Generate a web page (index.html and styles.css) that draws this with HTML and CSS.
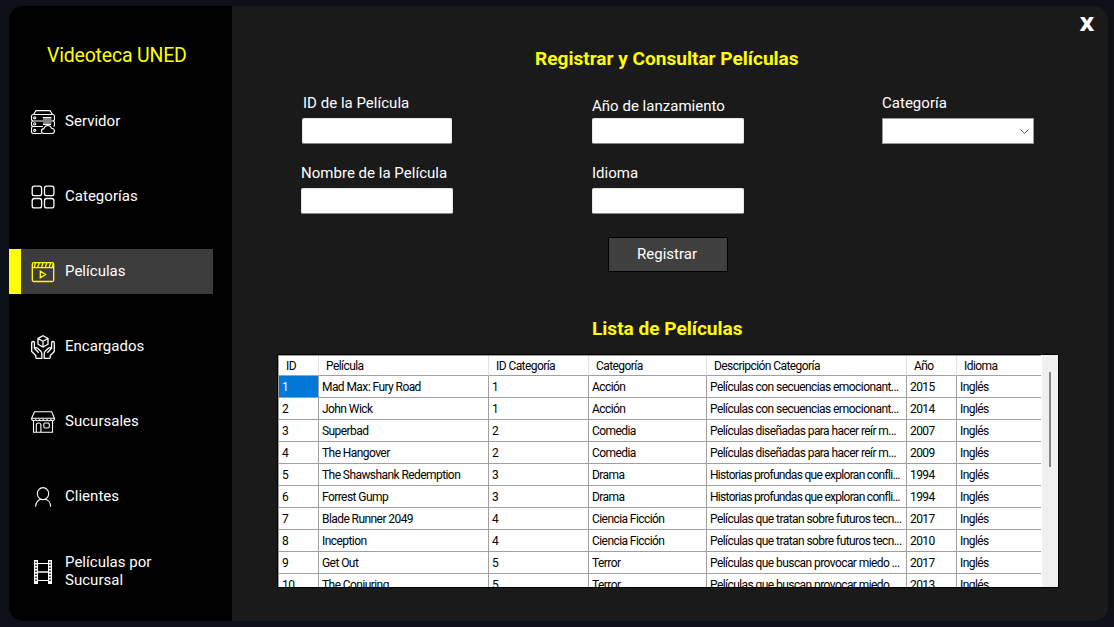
FILE: index.html
```html
<!DOCTYPE html>
<html lang="es">
<head>
<meta charset="utf-8">
<title>Videoteca UNED</title>
<link rel="stylesheet" href="styles.css">
</head>
<body>
<div class="window">
  <aside class="sidebar">
    <div class="brand">Videoteca UNED</div>
    <nav class="menu">
      <a class="item"><svg class="icon" viewBox="0 0 24 24"><path d="M2.500 4.500 5 .6h14l2.500 3.900M12 16.500H2.500q-2 0-2-2v-1.500q0-2 2-2h19q2 0 2 2v1.500q0 1.500-1 2M2.500 4.500h19q2 0 2 2v2.500q0 2-2 2h-19q-2 0-2-2V6.500q0-2 2-2zM2.500 16.500q-2 0-2 2v3q0 2 2 2h8M12 7.500h8.500M12 9h8.500M12 13h8.500M12 14.500h8"/><path class="cloud" d="M13 23.500q-2.600-.2-2.600-2.500 0-2 2.500-2.400.9-3.100 4-3.100 2.800 0 3.600 2.800 3 .3 3 2.700 0 2.500-2.500 2.500z"/><circle cx="3.700" cy="7.800" r="1.100"/><circle cx="3.700" cy="13.900" r="1.100"/><circle cx="3.700" cy="20.300" r="1.100"/></svg><span>Servidor</span></a>
      <a class="item"><svg class="icon bold" viewBox="0 0 24 24"><rect x="1.200" y="1.200" width="9.400" height="9.400" rx="2.200"/><rect x="13.500" y="1.200" width="9.400" height="9.400" rx="2.200"/><rect x="1.200" y="13.500" width="9.400" height="9.400" rx="2.200"/><rect x="13.500" y="13.500" width="9.400" height="9.400" rx="2.200"/></svg><span>Categorías</span></a>
      <a class="item active"><svg class="icon bold" viewBox="0 0 24 24"><rect x="1.300" y="2.700" width="21.400" height="18.800" rx="1.500"/><path d="M1.300 7.700h21.400M4.400 3 3.400 7M8.200 3l-1.400 4M12 3l-1.400 4M15.800 3l-1.400 4M19.600 3l-1.400 4M22.200 4l-1 3M9.300 11.200v6.600l5.300-3.300z"/></svg><span>Películas</span></a>
      <a class="item"><svg class="icon bold" viewBox="0 0 24 24"><path d="m12 .7 5 2.800v5.700l-5 2.800-5-2.800V3.500zM7 3.500l5 2.800 5-2.800M12 6.300V12M4.800 23.300v-2.800L.7 16.500V7.700q0-1.200 1.400-1.200 1.300 0 1.300 1.300v5.500l4.300 4.500M3.400 13.300q1.500-1.400 3.200 0l3 2.700q1.200 1.200 1.200 2.800v4.500h-6M19.200 23.300v-2.800l4.100-4V7.700q0-1.200-1.400-1.200-1.300 0-1.300 1.300v5.500l-4.300 4.500M20.600 13.300q-1.500-1.400-3.200 0l-3 2.700q-1.200 1.200-1.200 2.800v4.500h6"/></svg><span>Encargados</span></a>
      <a class="item"><svg class="icon" viewBox="0 0 24 24"><path d="M3.500 1.700h17.200L23.400 8.300H.6zM.6 8.300q0 2.500 2 2.500t2.100-1.500q.3 1.500 1.900 1.500t1.900-1.500q.3 1.500 1.900 1.500t1.900-1.500q.3 1.500 1.900 1.500t1.900-1.500q.3 1.500 1.900 1.500t1.900-1.500q.3 1.500 1.900 1.500t1.600-2.500M2.500 10.800v11.500h19V10.800M5.300 22v-7q0-2 2.300-2t2.300 2v7"/><rect x="12.800" y="13" width="5.500" height="5" rx="1.200"/></svg><span>Sucursales</span></a>
      <a class="item"><svg class="icon" viewBox="0 0 24 24"><ellipse cx="12" cy="8.600" rx="5.700" ry="6"/><path d="M4.600 21.800c0-4 2.400-7.200 5.600-7.600M19.600 21.800c0-4-2.400-7.200-5.800-7.600"/></svg><span>Clientes</span></a>
      <a class="item"><svg class="icon" viewBox="0 0 24 24"><path class="rail" d="M5 0v24M19 0v24"/><path class="holes" d="M5 1.500v21M19 1.500v21"/><path d="M7 3.500h10M7 20.500h10"/><path class="divider" d="M7 12h10"/></svg><span>Películas por Sucursal</span></a>
    </nav>
  </aside>
  <main class="content">
    <button class="close">X</button>
    <h1 class="title">Registrar y Consultar Películas</h1>
    <form class="form">
      <div class="field"><label class="nudge">ID de la Película</label><div class="input short"></div></div>
      <div class="field"><label class="low">Año de lanzamiento</label><div class="input"></div></div>
      <div class="field"><label>Categoría</label><div class="input select"><svg class="chevron" viewBox="0 0 9 5"><path d="M.5.5l4 4 4-4"/></svg></div></div>
      <div class="field"><label>Nombre de la Película</label><div class="input"></div></div>
      <div class="field"><label>Idioma</label><div class="input"></div></div>
    </form>
    <button class="submit" type="button">Registrar</button>
    <h2 class="title list-title">Lista de Películas</h2>
    <div class="grid">
      <table class="movies">
        <colgroup><col class="c-id"><col class="c-name"><col class="c-catid"><col class="c-cat"><col class="c-desc"><col class="c-year"><col class="c-lang"></colgroup>
        <thead><tr><th>ID</th><th>Película</th><th>ID Categoría</th><th>Categoría</th><th>Descripción Categoría</th><th>Año</th><th>Idioma</th></tr></thead>
        <tbody>
          <tr><td class="selected">1</td><td>Mad Max: Fury Road</td><td>1</td><td>Acción</td><td>Películas con secuencias emocionant...</td><td>2015</td><td>Inglés</td></tr>
          <tr><td>2</td><td>John Wick</td><td>1</td><td>Acción</td><td>Películas con secuencias emocionant...</td><td>2014</td><td>Inglés</td></tr>
          <tr><td>3</td><td>Superbad</td><td>2</td><td>Comedia</td><td>Películas diseñadas para hacer reír m...</td><td>2007</td><td>Inglés</td></tr>
          <tr><td>4</td><td>The Hangover</td><td>2</td><td>Comedia</td><td>Películas diseñadas para hacer reír m...</td><td>2009</td><td>Inglés</td></tr>
          <tr><td>5</td><td>The Shawshank Redemption</td><td>3</td><td>Drama</td><td class="tight">Historias profundas que exploran confli...</td><td>1994</td><td>Inglés</td></tr>
          <tr><td>6</td><td>Forrest Gump</td><td>3</td><td>Drama</td><td class="tight">Historias profundas que exploran confli...</td><td>1994</td><td>Inglés</td></tr>
          <tr><td>7</td><td>Blade Runner 2049</td><td>4</td><td>Ciencia Ficción</td><td>Películas que tratan sobre futuros tecn...</td><td>2017</td><td>Inglés</td></tr>
          <tr><td>8</td><td>Inception</td><td>4</td><td>Ciencia Ficción</td><td>Películas que tratan sobre futuros tecn...</td><td>2010</td><td>Inglés</td></tr>
          <tr><td>9</td><td>Get Out</td><td>5</td><td>Terror</td><td>Películas que buscan provocar miedo ...</td><td>2017</td><td>Inglés</td></tr>
          <tr><td>10</td><td>The Conjuring</td><td>5</td><td>Terror</td><td>Películas que buscan provocar miedo ...</td><td>2013</td><td>Inglés</td></tr>
        </tbody>
      </table>
      <div class="scrollbar"><div class="thumb"></div></div>
    </div>
  </main>
</div>
</body>
</html>
```
FILE: styles.css
```css
* { box-sizing: border-box; }
body { margin: 0; height: 627px; padding: 6px 6px 6px 9px; overflow: hidden; background: #0d1117; font-family: Roboto, sans-serif; font-size: 15px; letter-spacing: 0.020px; color: #fff; }
button { font: inherit; color: inherit; padding: 0; }
.window { display: flex; width: 1099px; height: 615px; border-radius: 14px; overflow: hidden; background: #1a1a1a; }

.sidebar { width: 223px; background: #000; flex: none; }
.brand { height: 93px; padding: 38px 0 0 38px; font-size: 19.500px; letter-spacing: -0.200px; line-height: 24px; color: #ff0; white-space: nowrap; }
.menu { display: flex; flex-direction: column; gap: 30px; }
.item { display: flex; align-items: center; gap: 10px; width: 204px; height: 45px; padding-left: 22px; line-height: 18px; }
.item span { width: 110px; padding-bottom: 1px; }
.item.active { background: #3c3c3c; border-left: 12px solid #ff0; padding-left: 10px; }
.icon { width: 24px; height: 24px; flex: none; margin-top: 1px; fill: none; stroke: #fff; stroke-width: 1.100; }
.icon.bold { stroke-width: 1.300; }
.active .icon { stroke: #ff0; }
.icon .cloud { fill: #000; }
.icon .rail { stroke-width: 4; }
.icon .holes { stroke: #444; stroke-width: 2; stroke-dasharray: 1.500 1.500; }
.icon .divider { stroke: #bbb; stroke-width: 2; }

.content { flex: 1; display: flex; flex-direction: column; position: relative; }
.close { position: absolute; top: 4px; right: 11px; width: 20px; height: 28px; border: 0; background: none; font: 800 20px/28px "Open Sans", sans-serif; }
.title { margin: 41px 0 0; padding-left: 303px; font-size: 19.100px; letter-spacing: -0.020px; line-height: 24px; font-weight: 700; color: #ff0; white-space: nowrap; }
.form { display: grid; grid-template-columns: 291px 290px 152px; grid-auto-rows: 70px; margin: 16px 0 0 69px; }
.field label { display: block; height: 31px; padding-top: 7px; line-height: 18px; white-space: nowrap; }
.field label.nudge { padding-left: 2px; }
.field label.low { padding-top: 10px; }
.input { width: 152px; height: 26px; background: #fff; border: 1px solid #e6e6e6; border-bottom-color: #868686; border-radius: 2px; }
.input.short { width: 150px; margin-left: 1px; }
.input.select { display: flex; align-items: center; justify-content: flex-end; padding: 1px 4px 0 0; border-color: #999; border-radius: 0; }
.chevron { width: 9px; height: 5px; fill: none; stroke: #555; }
.submit { width: 120px; height: 35px; margin: 10px 0 0 376px; padding: 0 2px 2px 0; background: #404040; border: 1px solid #000; }
.list-title { margin-top: 45px; padding-left: 360px; }

.grid { display: flex; width: 782px; height: 234px; margin: 13px 0 0 45px; border: 1px solid #000; background: #fff; overflow: hidden; }
.movies { width: 763px; table-layout: fixed; border-collapse: separate; border-spacing: 0; border-left: 1px solid #a0a0a0; border-top: 1px solid #a0a0a0; color: #000; font-size: 12px; letter-spacing: -0.570px; flex: none; height: max-content; }
.c-id { width: 40px; }
.c-name { width: 170px; }
.c-catid { width: 100px; }
.c-cat { width: 118px; }
.c-desc { width: 200px; }
.c-year { width: 50px; }
.movies th, .movies td { padding: 2px 0 0 3px; border-right: 1px solid #a0a0a0; border-bottom: 1px solid #a0a0a0; text-align: left; font-weight: 400; white-space: nowrap; line-height: 19px; height: 22px; }
.movies th { height: 20px; line-height: 17px; padding-left: 7px; border-right-color: #e0e0e0; }
.movies th:last-child, .movies td:last-child { border-right: 0; }
.movies .tight { letter-spacing: -0.700px; }
.movies .selected { background: #0078d7; color: #fff; }
.scrollbar { width: 16px; height: 232px; margin-left: 1px; padding: 17px 0 0 7px; background: #f0f0f0; }
.thumb { width: 2px; height: 95px; background: #858585; }
```
